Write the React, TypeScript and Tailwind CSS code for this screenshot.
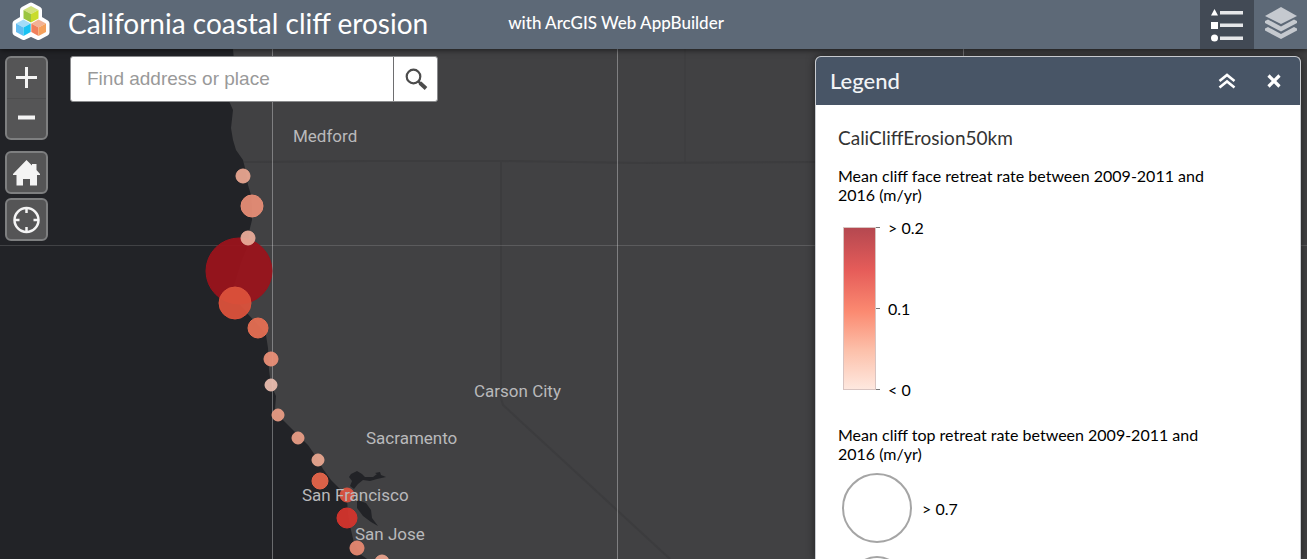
import React from "react";

type Erosion = { x: number; y: number; r: number; fill: string };
type Place = { name: string; x: number; y: number };

const points: Erosion[] = [
  { x: 239, y: 222, r: 33, fill: "#9a131c" },
  { x: 243, y: 127, r: 7, fill: "#e9a691" },
  { x: 252, y: 157, r: 11, fill: "#e78d76" },
  { x: 248, y: 189, r: 7, fill: "#e9ab99" },
  { x: 235, y: 254, r: 16, fill: "#dc523c" },
  { x: 258, y: 279, r: 10, fill: "#e56f53" },
  { x: 271, y: 310, r: 7, fill: "#ea8f77" },
  { x: 271, y: 336, r: 6, fill: "#e9bcae" },
  { x: 278, y: 366, r: 6, fill: "#e99c85" },
  { x: 298, y: 389, r: 6, fill: "#e99d86" },
  { x: 318, y: 411, r: 6, fill: "#e9a68f" },
  { x: 320, y: 432, r: 8, fill: "#e6654a" },
  { x: 347, y: 446, r: 7, fill: "#dd5441" },
  { x: 347, y: 469, r: 10, fill: "#d5342d" },
  { x: 357, y: 499, r: 7, fill: "#e78871" },
  { x: 382, y: 513, r: 7, fill: "#e9a38d" },
];

const places: Place[] = [
  { name: "Medford", x: 293, y: 93 },
  { name: "Carson City", x: 474, y: 348 },
  { name: "Sacramento", x: 366, y: 395 },
  { name: "San Francisco", x: 302, y: 452 },
  { name: "San Jose", x: 355, y: 491 },
];

function BaseMap() {
  return (
    <svg className="absolute inset-0 h-full w-full" role="img" aria-label="Map of cliff erosion along the California coast">
      <rect width="100%" height="100%" fill="#414143" />
      <path
        d="M0 0H233L234 12L229 40L229 52L233 61L231 79L233 91L236 101L243 111L245 119L248 136L251 146L252 161L252 171L249 183L248 196L241 213L234 236L236 251L246 263L258 276L266 286L268 299L269 321L271 336L276 347L275 360L283 371L295 383L308 396L317 409L323 420L331 431L340 440L347 450L348 466L351 481L354 494L360 505L370 512V4000H0Z"
        fill="#222327"
      />
      <path
        d="M351 425L357 422L362 425L365 428L373 428L377 425L380 427L375 424L380 423L381 426L386 428L377 430L370 432L363 431L358 435L354 440L350 437L352 432L349 428ZM357 451L366 454L371 461L372 469L378 477L371 473L363 467L357 459Z"
        fill="#222327"
      />
      <g fill="none" stroke="#3c3c3e" strokeWidth="2">
        <path d="M244 113L370 112L500 112L640 114L816 113" />
        <path d="M501 113V349L503 356L670 510" />
        <path d="M685 0V113" strokeWidth="1" />
      </g>
      <g stroke="#ffffff" strokeWidth="1">
        <path d="M0 196.500H4000" strokeOpacity="0.14" />
        <path d="M272.500 0V4000M617.500 0V4000M963.500 0V4000" strokeOpacity="0.33" />
      </g>
      {points.map((p) => (
        <circle key={`${p.x}-${p.y}`} cx={p.x} cy={p.y} r={p.r} fill={p.fill} fillOpacity="0.94" stroke={p.fill} />
      ))}
      <g className="font-['Roboto',sans-serif] text-[17px]" fill="#b9b9bb">
        {places.map((p) => (
          <text key={p.name} x={p.x} y={p.y}>
            {p.name}
          </text>
        ))}
      </g>
    </svg>
  );
}

function Logo() {
  return (
    <svg className="mb-2 h-[38px] w-[38px] shrink-0" viewBox="0 0 38 38" aria-hidden="true">
      <path
        d="M19 4L26.500 8V17L34 21.500V30.500L26.500 34.500L19 31L11.500 34.500L4 30.500V21.500L11.500 17V8Z"
        fill="#fff"
        stroke="#fff"
        strokeWidth="7"
        strokeLinejoin="round"
      />
      <path d="M19 4L26.500 8L19 12L11.500 8Z" fill="#d2e27c" />
      <path d="M11.500 8L19 12V20.500L11.500 16.500Z" fill="#9cc53f" />
      <path d="M26.500 8L19 12V20.500L26.500 16.500Z" fill="#c9dc2c" />
      <path d="M11.500 17.500L18.700 21.500L11.500 25.500L4 21.500Z" fill="#a3dcf8" />
      <path d="M4 21.500L11.500 25.500V34L4 30Z" fill="#62bdf1" />
      <path d="M18.700 21.500L11.500 25.500V34L18.700 30Z" fill="#19c3f3" />
      <path d="M26.500 17.500L34 21.500L26.500 25.500L19.300 21.500Z" fill="#f2b294" />
      <path d="M19.300 21.500L26.500 25.500V34L19.300 30Z" fill="#f0805c" />
      <path d="M34 21.500L26.500 25.500V34L34 30Z" fill="#f5a15c" />
    </svg>
  );
}

function Header() {
  return (
    <header className="relative z-10 flex h-[49px] shrink-0 items-center bg-[#5d6977] pl-3 text-white shadow-[0_1px_6px_rgba(0,0,0,0.6)]">
      <Logo />
      <h1 className="ml-[18px] pb-1 text-[28px] leading-9 whitespace-nowrap">California coastal cliff erosion</h1>
      <p className="ml-20 pb-1 text-[17px] leading-6 font-medium whitespace-nowrap">with ArcGIS Web AppBuilder</p>
      <nav className="ml-auto flex self-stretch">
        <button type="button" aria-label="Legend" aria-pressed="true" className="flex w-[54px] items-center justify-center bg-[#424a55]">
          <svg className="h-9 w-9" viewBox="0 0 36 36" fill="#fff" aria-hidden="true">
            <path d="M5.500 2L9 8.500H2ZM2 15H9V22H2Z" />
            <circle cx="5.500" cy="31" r="3.500" />
            <path d="M11 4H34V7.500H11ZM11 16.500H34V20H11ZM11 29.500H34V33H11Z" fill="#e6e7e9" />
          </svg>
        </button>
        <button type="button" aria-label="Layer List" className="flex w-[53px] items-center justify-center pb-1">
          <svg className="h-9 w-9" viewBox="0 0 36 36" fill="#c5c9cf" aria-hidden="true">
            <path d="M18 2L34 11L18 19L2 11Z" />
            <path d="M2 16L5 14.500L18 21.500L31 14.500L34 16V18L18 26.500L2 18Z" />
            <path d="M2 23.500L5 22L18 29L31 22L34 23.500V25.500L18 34L2 25.500Z" />
          </svg>
        </button>
      </nav>
    </header>
  );
}

const mapButton = "flex h-[43px] w-[43px] items-center justify-center rounded-md border-2 border-[#7e7f80] bg-[#555556]";

function MapTools() {
  return (
    <div className="flex w-[43px] flex-col">
      <div className="flex h-[84px] flex-col rounded-md border-2 border-[#7e7f80] bg-[#555556]">
        <button type="button" aria-label="Zoom in" className="flex flex-1 items-center justify-center border-b border-[#4d4d4e]">
          <svg className="h-6 w-6" viewBox="0 0 24 24" stroke="#f4f4f4" strokeWidth="3" aria-hidden="true">
            <path d="M11.500 1V22M1 11.500H22" />
          </svg>
        </button>
        <button type="button" aria-label="Zoom out" className="flex flex-1 items-center justify-center">
          <svg className="h-6 w-6" viewBox="0 0 24 24" stroke="#f4f4f4" strokeWidth="4" aria-hidden="true">
            <path d="M3 11.500H20" />
          </svg>
        </button>
      </div>
      <button type="button" aria-label="Default extent" className={`mt-[11px] ${mapButton}`}>
        <svg className="h-7 w-7" viewBox="0 0 28 28" fill="#f4f4f4" aria-hidden="true">
          <path d="M13.500 1L19 6.500V5H23.500V11L27 15V16H24V26.500H17V20H10V26.500H3.500V16H0V15Z" />
        </svg>
      </button>
      <button type="button" aria-label="My location" className={`mt-1 ${mapButton}`}>
        <svg className="h-7 w-7" viewBox="0 0 28 28" fill="none" stroke="#f4f4f4" strokeWidth="2.500" aria-hidden="true">
          <circle cx="13.500" cy="14" r="12" />
          <path d="M13.500 2V7M13.500 21V26M1.500 14H6.500M20.500 14H25.500" />
        </svg>
      </button>
    </div>
  );
}

function Search() {
  return (
    <form className="ml-[22px] flex h-[46px] w-[368px] rounded-[3px] border border-[#8a8b8d] bg-white" role="search">
      <input
        type="text"
        aria-label="Find address or place"
        placeholder="Find address or place"
        className="min-w-0 flex-1 bg-transparent px-4 font-['Liberation_Sans',Arial,sans-serif] text-[19px] text-gray-800 outline-none placeholder:text-[#999999]"
      />
      <button type="button" aria-label="Search" className="flex w-[44px] items-center justify-center border-l border-[#6e6e70]">
        <svg className="h-6 w-6" viewBox="0 0 24 24" fill="none" stroke="#4c4c4c" aria-hidden="true">
          <circle cx="9.500" cy="9.500" r="6.800" strokeWidth="2.200" />
          <path d="M14 14L16.500 16.500" strokeWidth="2.500" />
          <path d="M16 16L22 21.500" strokeWidth="3.800" />
        </svg>
      </button>
    </form>
  );
}

function LegendPanel() {
  return (
    <section aria-label="Legend" className="mr-[6px] ml-auto flex w-[486px] flex-col self-stretch overflow-hidden rounded-t-md border border-b-0 border-[#c9ccd1] bg-white text-black shadow-[0_0_8px_rgba(0,0,0,0.5)]">
      <div className="flex h-12 shrink-0 items-center bg-[#485566] pr-4 pl-[14px] text-[#f2f4f6]">
        <h2 className="text-[22px] leading-7 font-medium">Legend</h2>
        <button type="button" aria-label="Collapse" className="ml-auto flex h-5 w-5 items-center justify-center">
          <svg className="h-4 w-[18px]" viewBox="0 0 18 16" fill="none" stroke="#fff" strokeWidth="2.600" aria-hidden="true">
            <path d="M1.500 8L9 2L16.500 8M1.500 14.500L9 8.500L16.500 14.500" />
          </svg>
        </button>
        <button type="button" aria-label="Close" className="ml-[27px] flex h-5 w-5 items-center justify-center">
          <svg className="h-[14px] w-[14px]" viewBox="0 0 14 14" stroke="#fff" strokeWidth="3.200" aria-hidden="true">
            <path d="M1.500 1.500L12.500 12.500M12.500 1.500L1.500 12.500" />
          </svg>
        </button>
      </div>
      <div className="min-h-0 flex-1 overflow-hidden px-[22px] pt-[21px] text-[16px] leading-[19px]">
        <h3 className="text-[19px] leading-6 text-[#333333]">CaliCliffErosion50km</h3>
        <p className="mt-4 w-[392px]">Mean cliff face retreat rate between 2009-2011 and 2016 (m/yr)</p>
        <div className="mt-[14px] flex h-[181px] pl-[5px]">
          <div className="my-[9px] w-[33px] border border-[#d8c4c1] bg-[linear-gradient(#b54850,#e55c59_26%,#fb8a71_52%,#fcc0aa_76%,#fee8df)]" />
          <div className="my-[9px] flex w-1 flex-col justify-between">
            <span className="h-px bg-[#777777]" />
            <span className="h-px bg-[#777777]" />
            <span className="h-px bg-[#777777]" />
          </div>
          <div className="ml-2 flex flex-col justify-between">
            <span>&gt; 0.2</span>
            <span>0.1</span>
            <span>&lt; 0</span>
          </div>
        </div>
        <p className="mt-[26px] w-[392px]">Mean cliff top retreat rate between 2009-2011 and 2016 (m/yr)</p>
        <div className="mt-[10px] flex items-center pl-1">
          <span className="h-[70px] w-[70px] rounded-full border-2 border-[#a5a5a5]" />
          <span className="ml-[10px]">&gt; 0.7</span>
        </div>
        <div className="mt-[13px] flex w-[78px] justify-center">
          <span className="h-[54px] w-[54px] rounded-full border-2 border-[#a5a5a5]" />
        </div>
      </div>
    </section>
  );
}

export default function App() {
  return (
    <div className="flex h-screen flex-col overflow-hidden bg-[#414143] font-['Lato',sans-serif]">
      <Header />
      <main className="relative min-h-0 flex-1">
        <BaseMap />
        <div className="relative flex h-full items-start pt-[7px] pl-[5px]">
          <MapTools />
          <Search />
          <LegendPanel />
        </div>
      </main>
    </div>
  );
}
